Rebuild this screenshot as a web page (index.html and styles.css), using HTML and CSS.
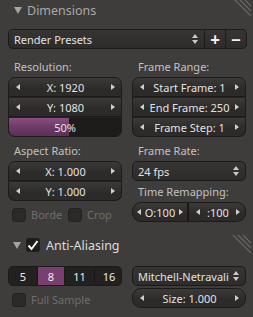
FILE: index.html
```html
<!DOCTYPE html>
<html lang="en">
<head>
  <meta charset="UTF-8" />
  <title>Dimensions</title>
  <link rel="stylesheet" href="styles.css">
</head>
<body>

<div class="panel">
  <div class="panel-head">
    <span class="tri"></span>
    <span class="head-title">Dimensions</span>
  </div>
  <svg class="grip" width="24" height="16" viewBox="0 0 24 16">
    <path d="M8 0 L24 16 M13 0 L24 11 M18 0 L24 6" stroke="#6a6966" stroke-width="1.2" fill="none" />
  </svg>

  <div class="presets">
    <div class="menu">
      <span>Render Presets</span>
      <span class="updown"><i class="up"></i><i class="down"></i></span>
    </div>
    <div class="tool">+</div>
    <div class="tool last">&minus;</div>
  </div>

  <div class="cols">
    <div class="col">
      <div class="label">Resolution:</div>
      <div class="stack">
        <div class="field"><i class="al"></i><span>X: 1920</span><i class="ar"></i></div>
        <div class="field"><i class="al"></i><span>Y: 1080</span><i class="ar"></i></div>
        <div class="field slider">
          <div class="fill" style="width: 54%"></div>
          <span>50%</span>
        </div>
      </div>

      <div class="label gap">Aspect Ratio:</div>
      <div class="stack">
        <div class="field"><i class="al"></i><span>X: 1.000</span><i class="ar"></i></div>
        <div class="field"><i class="al"></i><span>Y: 1.000</span><i class="ar"></i></div>
      </div>
      <div class="checks">
        <div class="check off"><span class="box"></span>Borde</div>
        <div class="check off"><span class="box"></span>Crop</div>
      </div>
    </div>

    <div class="col">
      <div class="label">Frame Range:</div>
      <div class="stack">
        <div class="field"><i class="al"></i><span>Start Frame: 1</span><i class="ar"></i></div>
        <div class="field"><i class="al"></i><span>End Frame: 250</span><i class="ar"></i></div>
        <div class="field"><i class="al"></i><span>Frame Step: 1</span><i class="ar"></i></div>
      </div>

      <div class="label gap">Frame Rate:</div>
      <div class="menu single">
        <span>24 fps</span>
        <span class="updown"><i class="up"></i><i class="down"></i></span>
      </div>
      <div class="label lower">Time Remapping:</div>
      <div class="pair">
        <div class="field"><i class="al"></i><span>O:100</span><i class="ar"></i></div>
        <div class="field"><i class="al"></i><span>:100</span><i class="ar"></i></div>
      </div>
    </div>
  </div>
</div>

<div class="panel second">
  <div class="panel-head aa">
    <span class="tri"></span>
    <span class="cb-on">
      <svg width="12" height="11" viewBox="0 0 12 11">
        <path d="M1.5 5.5 L4.5 9 L10.5 1" stroke="#f2f2f2" stroke-width="2" fill="none" />
      </svg>
    </span>
    <span class="head-title">Anti-Aliasing</span>
  </div>
  <svg class="grip" width="24" height="18" viewBox="0 0 24 18">
    <path d="M6 0 L24 18 M11 0 L24 13 M16 0 L24 8" stroke="#6a6966" stroke-width="1.2" fill="none" />
  </svg>

  <div class="cols aa-cols">
    <div class="col">
      <div class="samples">
        <div class="seg">5</div>
        <div class="seg on">8</div>
        <div class="seg">11</div>
        <div class="seg">16</div>
      </div>
      <div class="checks">
        <div class="check off"><span class="box"></span>Full Sample</div>
      </div>
    </div>
    <div class="col">
      <div class="menu single">
        <span>Mitchell-Netravali</span>
        <span class="updown"><i class="up"></i><i class="down"></i></span>
      </div>
      <div class="field round"><i class="al"></i><span>Size: 1.000</span><i class="ar"></i></div>
    </div>
  </div>
</div>

</body>
</html>
```

FILE: styles.css
```css
html, body {
  margin: 0;
  padding: 0;
  background: #3e3d3b;
  color: #e0e0e0;
  font-family: "Noto Sans", "DejaVu Sans", sans-serif;
  font-size: 11px;
  width: 253px;
  height: 317px;
  overflow: hidden;
}

* {
  box-sizing: border-box;
}

.panel {
  position: relative;
}

.panel-head {
  display: flex;
  align-items: center;
  height: 20px;
  padding-left: 14px;
  font-size: 12.5px;
  color: #a9a9a7;
}

.tri {
  width: 0;
  height: 0;
  border-left: 4px solid transparent;
  border-right: 4px solid transparent;
  border-top: 7px solid #a3a3a1;
  margin-right: 5px;
  margin-top: 1px;
}

.grip {
  position: absolute;
  top: 0;
  right: 2px;
}

.presets {
  display: flex;
  height: 20px;
  margin: 9px 6px 0 8px;
}

.menu {
  display: flex;
  align-items: center;
  justify-content: space-between;
  flex: 1;
  padding: 0 5px 0 5px;
  background: linear-gradient(#363533, #2d2c2a);
  border: 1px solid #1b1b1a;
  border-radius: 5px 0 0 5px;
  color: #e2e2e2;
}

.menu.single {
  height: 20px;
  border-radius: 5px;
  flex: none;
}

.updown {
  display: flex;
  flex-direction: column;
  gap: 2px;
  margin-right: 1px;
}

.up, .down {
  display: block;
  width: 0;
  height: 0;
  border-left: 3px solid transparent;
  border-right: 3px solid transparent;
}

.up {
  border-bottom: 4px solid #c9c9c9;
}

.down {
  border-top: 4px solid #c9c9c9;
}

.tool {
  width: 21px;
  display: flex;
  align-items: center;
  justify-content: center;
  background: linear-gradient(#363533, #2d2c2a);
  border: 1px solid #1b1b1a;
  border-left: none;
  font-size: 17px;
  font-weight: bold;
  color: #f0f0f0;
  line-height: 1;
}

.tool.last {
  border-radius: 0 5px 5px 0;
}

.cols {
  display: grid;
  grid-template-columns: 114px 114px;
  column-gap: 10px;
  margin: 8px 7px 0 8px;
}

.label {
  height: 20px;
  line-height: 20px;
  padding-left: 6px;
  color: #c2c2c0;
}

.label.gap {
  margin-top: 4px;
}

.label.lower {
  margin-top: 1px;
}

.stack .field:first-child {
  border-radius: 7px 7px 0 0;
}

.stack .field:last-child {
  border-radius: 0 0 7px 7px;
}

.stack .field + .field {
  border-top-color: #232321;
}

.field {
  position: relative;
  display: flex;
  align-items: center;
  justify-content: space-between;
  height: 20px;
  padding: 0 6px 0 7px;
  background: linear-gradient(#3b3a38, #2c2b29 60%);
  border: 1px solid #1b1b1a;
  color: #e2e2e2;
  overflow: hidden;
}

.field.round {
  border-radius: 9px;
  margin-top: 2px;
}

.al, .ar {
  display: block;
  width: 0;
  height: 0;
  border-top: 3px solid transparent;
  border-bottom: 3px solid transparent;
}

.al {
  border-right: 4px solid #cfcfcf;
}

.ar {
  border-left: 4px solid #cfcfcf;
}

.slider {
  justify-content: center;
  padding: 0;
  background: #1d1c1b;
}

.slider .fill {
  position: absolute;
  left: 0;
  top: 0;
  bottom: 0;
  background: linear-gradient(#8a4d80, #6e3a66 50%, #5c3055);
}

.slider span {
  position: relative;
}

.checks {
  display: flex;
  align-items: center;
  gap: 6px;
  height: 21px;
  margin-top: 3px;
  padding-left: 4px;
}

.check {
  display: flex;
  align-items: center;
  width: 62px;
  color: #6e6d6a;
}

.box {
  width: 14px;
  height: 14px;
  margin-right: 5px;
  border-radius: 3px;
  background: #2b2a28;
  border: 1px solid #242322;
}

.second {
  margin-top: 10px;
}

.panel-head.aa {
  color: #dcdcdc;
  padding-left: 13px;
}

.cb-on {
  display: flex;
  align-items: center;
  justify-content: center;
  width: 14px;
  height: 14px;
  margin-right: 6px;
  border-radius: 3px;
  background: #1e1d1c;
}

.aa-cols {
  margin-top: 11px;
}

.samples {
  display: grid;
  grid-template-columns: 28px 27px 30px 29px;
  height: 20px;
  border: 1px solid #1b1b1a;
  border-radius: 5px;
  overflow: hidden;
  background: #222120;
}

.seg {
  display: flex;
  align-items: center;
  justify-content: center;
  border-left: 1px solid #181817;
  color: #ececec;
}

.seg:first-child {
  border-left: none;
}

.seg.on {
  background: #7a3f70;
}

.col .checks .check {
  width: auto;
}

.pair {
  display: grid;
  grid-template-columns: 56px 58px;
}

.pair .field:first-child {
  border-radius: 9px 0 0 9px;
  padding: 0 4px;
}

.pair .field:last-child {
  border-radius: 0 9px 9px 0;
  border-left-color: #151514;
  padding: 0 5px 0 7px;
}
```
